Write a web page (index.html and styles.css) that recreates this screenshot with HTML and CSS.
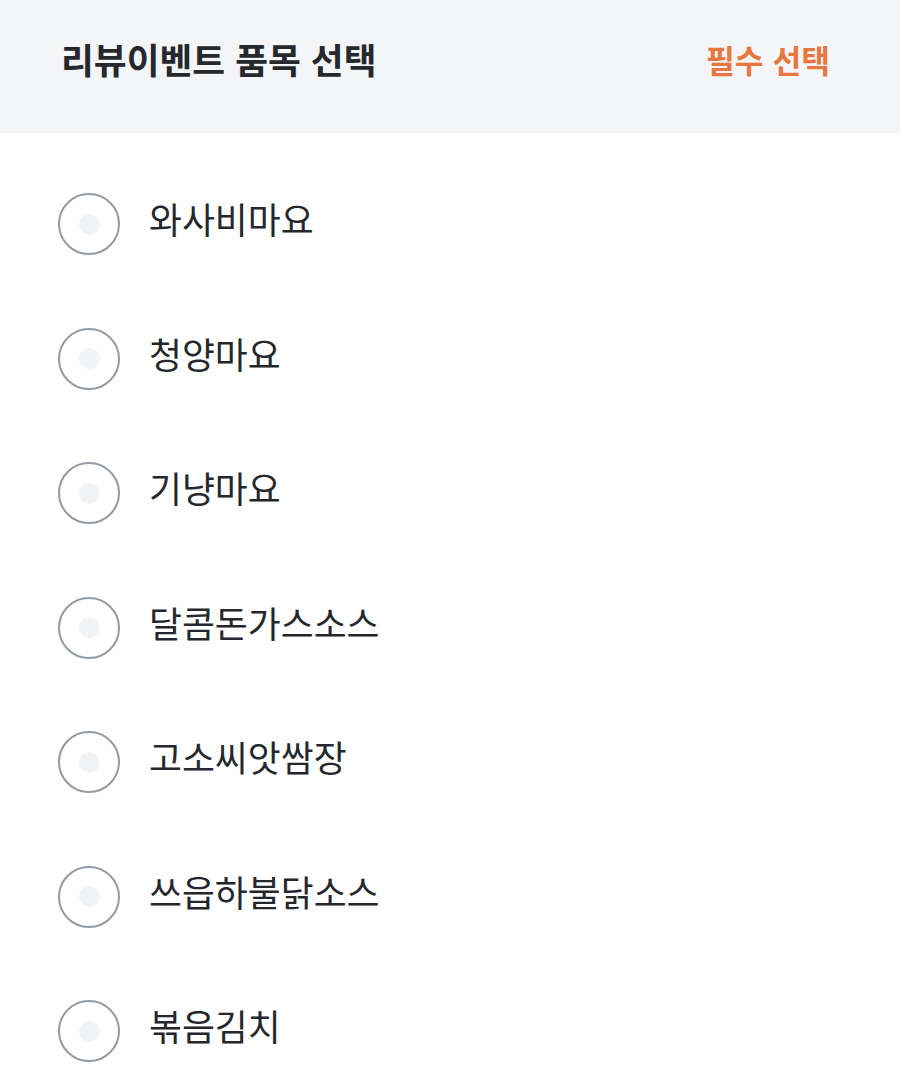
FILE: index.html
```html
<!DOCTYPE html>
<html lang="ko">
<head>
<meta charset="utf-8">
<link rel="stylesheet" href="styles.css">
</head>
<body>
<div class="page">
  <header class="header">
    <h1 class="title">리뷰이벤트 품목 선택</h1>
    <span class="required">필수 선택</span>
  </header>
  <ul class="options">
    <li class="option"><span class="radio"><span class="dot"></span></span><span class="label">와사비마요</span></li>
    <li class="option"><span class="radio"><span class="dot"></span></span><span class="label">청양마요</span></li>
    <li class="option"><span class="radio"><span class="dot"></span></span><span class="label">기냥마요</span></li>
    <li class="option"><span class="radio"><span class="dot"></span></span><span class="label">달콤돈가스소스</span></li>
    <li class="option"><span class="radio"><span class="dot"></span></span><span class="label">고소씨앗쌈장</span></li>
    <li class="option"><span class="radio"><span class="dot"></span></span><span class="label">쓰읍하불닭소스</span></li>
    <li class="option"><span class="radio"><span class="dot"></span></span><span class="label">볶음김치</span></li>
  </ul>
</div>
</body>
</html>
```
FILE: styles.css
```css
* { box-sizing: border-box; }
html, body { margin: 0; padding: 0; background: #ffffff; }
body {
  font-family: "Noto Sans CJK KR", "Noto Sans", sans-serif;
  color: #24272c;
}
.header {
  height: 133px;
  background: #f4f5f7;
  display: flex;
  align-items: center;
  justify-content: space-between;
  padding: 0 70px 14px 61px;
}
.title {
  margin: 0;
  font-size: 35.7px;
  line-height: 1.2;
  font-weight: 700;
  color: #25282d;
}
.required {
  font-size: 31.3px;
  line-height: 1.2;
  font-weight: 700;
  color: #e7773f;
}
.options {
  list-style: none;
  margin: 0;
  padding: 24px 0 0 58px;
}
.option {
  height: 134.5px;
  display: flex;
  align-items: center;
  gap: 29px;
}
.radio {
  width: 62px;
  height: 62px;
  border-radius: 50%;
  border: 2.6px solid #949aa2;
  display: flex;
  align-items: center;
  justify-content: center;
  flex: none;
}
.dot {
  width: 21px;
  height: 21px;
  border-radius: 50%;
  background: #f2f3f5;
}
.label {
  font-size: 35.8px;
  line-height: 1.2;
  font-weight: 400;
  color: #24272c;
  margin-bottom: 11px;
}
```
